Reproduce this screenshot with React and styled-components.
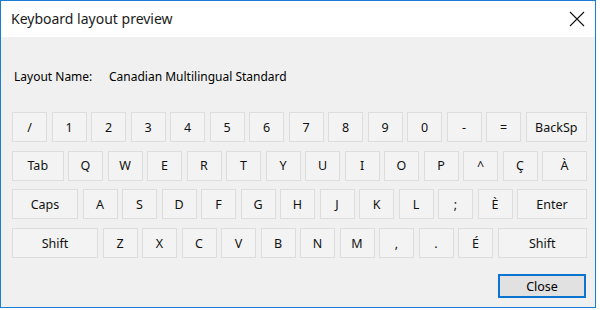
import React from "react";
import styled, { createGlobalStyle } from "styled-components";

const Global = createGlobalStyle`
  body {
    margin: 0;
    background: #ffffff;
    font-family: "Noto Sans", "Open Sans", sans-serif;
  }
`;

const Window = styled.div`
  width: 596px;
  height: 308px;
  box-sizing: border-box;
  border: 1px solid #1a7fd4;
  display: flex;
  flex-direction: column;
  background: #f0f0f0;
`;

const TitleBar = styled.div`
  height: 36px;
  background: #fff;
  display: flex;
  align-items: center;
  justify-content: space-between;
  padding: 0 10px;
`;

const Title = styled.span`
  font-size: 14px;
  color: #1a1a1a;
  margin-top: -1px;
`;

const CloseX = styled.div`
  width: 16px;
  height: 16px;
  display: flex;
`;

const Body = styled.div`
  flex: 1;
  display: flex;
  flex-direction: column;
  padding: 0 8px 0 11px;
`;

const NameRow = styled.div`
  display: flex;
  align-items: center;
  height: 22px;
  margin-top: 28px;
  padding-left: 2px;
  font-size: 12px;
  color: #000;
`;

const Label = styled.span`
  width: 95px;
`;

const Keyboard = styled.div`
  display: flex;
  flex-direction: column;
  gap: 8.7px;
  margin-top: 25px;
  width: 575px;
`;

const Row = styled.div`
  display: flex;
  gap: 4.5px;
`;

const Key = styled.div`
  width: ${(p) => p.$w || 35}px;
  flex: ${(p) => (p.$grow ? 1 : "none")};
  height: 30px;
  box-sizing: border-box;
  border: 1px solid #dddddd;
  background: #f3f3f3;
  display: flex;
  align-items: center;
  justify-content: center;
  font-size: 12.5px;
  color: #111;
`;

const Footer = styled.div`
  display: flex;
  justify-content: flex-end;
  margin-top: 16px;
  width: 574px;
`;

const Button = styled.button`
  width: 88px;
  height: 24px;
  box-sizing: border-box;
  border: 2px solid #0a74d1;
  background: #e1e1e1;
  font-family: inherit;
  font-size: 12.5px;
  color: #000;
  padding: 0;
`;

const rows = [
  { first: null, keys: ["/", "1", "2", "3", "4", "5", "6", "7", "8", "9", "0", "-", "="], last: "BackSp" },
  { first: ["Tab", 51.5], keys: ["Q", "W", "E", "R", "T", "Y", "U", "I", "O", "P", "^", "Ç"], last: "À" },
  { first: ["Caps", 66], keys: ["A", "S", "D", "F", "G", "H", "J", "K", "L", ";", "È"], last: "Enter" },
  { first: ["Shift", 86], keys: ["Z", "X", "C", "V", "B", "N", "M", ",", ".", "É"], last: "Shift" },
];

const App = () => {
  return (
    <>
      <Global />
      <Window>
        <TitleBar>
          <Title>Keyboard layout preview</Title>
          <CloseX>
            <svg width="16" height="16" viewBox="0 0 16 16">
              <path d="M1 1 L15 15 M15 1 L1 15" stroke="#111" strokeWidth="1.1" fill="none" />
            </svg>
          </CloseX>
        </TitleBar>
        <Body>
          <NameRow>
            <Label>Layout Name:</Label>
            <span>Canadian Multilingual Standard</span>
          </NameRow>
          <Keyboard>
            {rows.map((r, i) => (
              <Row key={i}>
                {r.first && <Key $w={r.first[1]}>{r.first[0]}</Key>}
                {r.keys.map((k, j) => (
                  <Key key={j}>{k}</Key>
                ))}
                <Key $grow>{r.last}</Key>
              </Row>
            ))}
          </Keyboard>
          <Footer>
            <Button>Close</Button>
          </Footer>
        </Body>
      </Window>
    </>
  );
};

export default App;
